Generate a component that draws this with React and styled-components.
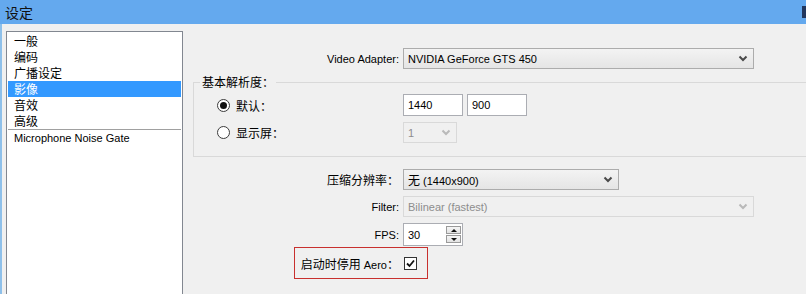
import React from "react";
import styled, { createGlobalStyle } from "styled-components";

const GlobalStyle = createGlobalStyle`
  html, body { margin: 0; padding: 0; }
  body {
    background: #f0f0f0;
    overflow: hidden;
    font-family: "Liberation Sans", "Noto Sans CJK SC", sans-serif;
    font-size: 11px;
    color: #000;
  }
`;

const Han = styled.span`
  font-family: "Noto Sans CJK SC", sans-serif;
  font-size: 12px;
`;

const Window = styled.div`
  width: 806px;
  height: 294px;
  display: flex;
  flex-direction: column;
  overflow: hidden;
  background: #f0f0f0;
`;

const TitleBar = styled.div`
  height: 24px;
  flex: none;
  display: flex;
  align-items: center;
  background: #64a9ee;
  padding-left: 5px;
`;

const Title = styled.span`
  font-family: "Noto Sans CJK SC", sans-serif;
  font-size: 14px;
  color: #111;
`;

const TitleEdge = styled.span`
  margin-left: auto;
  width: 4px;
  height: 12px;
  background: #22375e;
`;

const Body = styled.div`
  flex: 1;
  display: flex;
  min-height: 0;
  border-left: 2px solid #8ec0ea;
  padding-left: 4px;
`;

const CategoryList = styled.div`
  width: 177px;
  box-sizing: border-box;
  flex: none;
  margin-top: 7px;
  margin-bottom: -10px;
  padding-top: 1px;
  background: #fff;
  border: 1px solid #828790;
`;

const Item = styled.div`
  height: 16px;
  line-height: 16px;
  margin: 0 1px 0 1px;
  padding-left: 6px;
  white-space: nowrap;
  background: ${(p) => (p.$selected ? "#3399ff" : "transparent")};
  color: ${(p) => (p.$selected ? "#fff" : "#000")};
`;

const Separator = styled.div`
  height: 1px;
  margin: 0 1px 0 1px;
  background: #a0a0a0;
`;

const Content = styled.div`
  flex: 1;
  min-width: 0;
  margin-left: 10px;
  padding-top: 24px;
  display: flex;
  flex-direction: column;
  overflow: hidden;
`;

const FormRow = styled.div`
  display: grid;
  grid-template-columns: 206px auto;
  column-gap: 4px;
  align-items: center;
  justify-items: start;
  margin-top: ${(p) => p.$top || 0}px;
`;

const Label = styled.span`
  justify-self: end;
  white-space: nowrap;
`;

const SelectBox = styled.div`
  box-sizing: border-box;
  width: ${(p) => p.$w}px;
  height: 21px;
  display: flex;
  align-items: center;
  justify-content: space-between;
  padding: 0 5px 0 4px;
  border: 1px solid ${(p) => (p.$disabled ? "#d9d9d9" : "#acacac")};
  background: ${(p) =>
    p.$disabled ? "#f0f0f0" : "linear-gradient(#f3f3f3, #e5e5e5)"};
  color: ${(p) => (p.$disabled ? "#8d8d8d" : "#000")};
  white-space: nowrap;
`;

const Chevron = ({ color }) => (
  <svg width="10" height="7" viewBox="0 0 10 7">
    <polyline
      points="1.5,1.5 5,5 8.5,1.5"
      fill="none"
      stroke={color}
      strokeWidth="2"
    />
  </svg>
);

const Select = ({ w, disabled, children }) => (
  <SelectBox $w={w} $disabled={disabled}>
    <span>{children}</span>
    <Chevron color={disabled ? "#b9b9b9" : "#4a4a4a"} />
  </SelectBox>
);

const Group = styled.fieldset`
  margin: 5px -20px 0 0;
  padding: 4px 0 13px 0;
  border: 1px solid #d9d9d9;
  min-inline-size: 0;
  display: flex;
  flex-direction: column;
  gap: 6px;
`;

const Legend = styled.legend`
  margin-left: 6px;
  padding: 0 2px;
  line-height: 16px;
  height: 16px;
`;

const GroupRow = styled.div`
  display: grid;
  grid-template-columns: 205px auto;
  column-gap: 4px;
  align-items: center;
  justify-items: start;
`;

const RadioLabel = styled.label`
  display: flex;
  align-items: center;
  gap: 6px;
  padding-left: 23px;
`;

const RadioCircle = styled.span`
  box-sizing: border-box;
  width: 13px;
  height: 13px;
  border-radius: 50%;
  border: 1px solid #3c3c3c;
  background: #fff;
  display: flex;
  align-items: center;
  justify-content: center;
  &::after {
    content: "";
    width: 7px;
    height: 7px;
    border-radius: 50%;
    background: ${(p) => (p.$checked ? "#111" : "transparent")};
  }
`;

const Inputs = styled.div`
  display: flex;
  gap: 4px;
`;

const TextBox = styled.div`
  box-sizing: border-box;
  width: ${(p) => p.$w}px;
  height: 22px;
  display: flex;
  align-items: center;
  padding-left: 4px;
  background: #fff;
  border: 1px solid #abadb3;
`;

const SpinBox = styled.div`
  box-sizing: border-box;
  width: 60px;
  height: 23px;
  display: flex;
  align-items: center;
  padding: 0 1px 0 4px;
  background: #fff;
  border: 1px solid #abadb3;
`;

const SpinValue = styled.span`
  flex: 1;
`;

const SpinButtons = styled.div`
  display: flex;
  flex-direction: column;
  gap: 1px;
`;

const SpinButton = styled.div`
  box-sizing: border-box;
  width: 15px;
  height: 8px;
  border: 1px solid #9a9a9a;
  background: linear-gradient(#f6f6f6, #e2e2e2);
  display: flex;
  align-items: center;
  justify-content: center;
  &::after {
    content: "";
    width: 0;
    height: 0;
    border-left: 3px solid transparent;
    border-right: 3px solid transparent;
    ${(p) =>
      p.$down
        ? "border-top: 3px solid #111;"
        : "border-bottom: 3px solid #111;"}
  }
`;

const Highlight = styled.div`
  box-sizing: border-box;
  align-self: flex-start;
  margin: 1px 0 0 101px;
  height: 32px;
  display: flex;
  align-items: center;
  gap: 5px;
  padding-right: 10px;
  border: 1px solid #c8302e;
`;

const HighlightLabel = styled.span`
  width: 104px;
  text-align: right;
  white-space: nowrap;
`;

const CheckBox = styled.span`
  box-sizing: border-box;
  width: 13px;
  height: 13px;
  border: 1px solid #333;
  background: #fff;
  display: flex;
  align-items: center;
  justify-content: center;
`;

const items = ["一般", "编码", "广播设定", "影像", "音效", "高级"];

export default function App() {
  return (
    <>
      <GlobalStyle />
      <Window>
        <TitleBar>
          <Title>设定</Title>
          <TitleEdge />
        </TitleBar>
        <Body>
          <CategoryList>
            {items.map((it) => (
              <Item key={it} $selected={it === "影像"}>
                <Han>{it}</Han>
              </Item>
            ))}
            <Separator />
            <Item>Microphone Noise Gate</Item>
          </CategoryList>
          <Content>
            <FormRow>
              <Label>Video Adapter:</Label>
              <Select w={351}>NVIDIA GeForce GTS 450</Select>
            </FormRow>
            <Group>
              <Legend>
                <Han>基本解析度：</Han>
              </Legend>
              <GroupRow>
                <RadioLabel>
                  <RadioCircle $checked />
                  <Han>默认：</Han>
                </RadioLabel>
                <Inputs>
                  <TextBox $w={60}>1440</TextBox>
                  <TextBox $w={60}>900</TextBox>
                </Inputs>
              </GroupRow>
              <GroupRow>
                <RadioLabel>
                  <RadioCircle />
                  <Han>显示屏：</Han>
                </RadioLabel>
                <Select w={54} disabled>
                  1
                </Select>
              </GroupRow>
            </Group>
            <FormRow $top={12}>
              <Label>
                <Han>压缩分辨率：</Han>
              </Label>
              <Select w={216}>
                <Han>无</Han> (1440x900)
              </Select>
            </FormRow>
            <FormRow $top={6}>
              <Label>Filter:</Label>
              <Select w={351} disabled>
                Bilinear (fastest)
              </Select>
            </FormRow>
            <FormRow $top={6}>
              <Label>FPS:</Label>
              <SpinBox>
                <SpinValue>30</SpinValue>
                <SpinButtons>
                  <SpinButton />
                  <SpinButton $down />
                </SpinButtons>
              </SpinBox>
            </FormRow>
            <Highlight>
              <HighlightLabel>
                <Han>启动时停用</Han> Aero<Han>：</Han>
              </HighlightLabel>
              <CheckBox>
                <svg width="9" height="9" viewBox="0 0 9 9">
                  <polyline
                    points="1,4.5 3.5,7 8,1.5"
                    fill="none"
                    stroke="#111"
                    strokeWidth="1.8"
                  />
                </svg>
              </CheckBox>
            </Highlight>
          </Content>
        </Body>
      </Window>
    </>
  );
}
